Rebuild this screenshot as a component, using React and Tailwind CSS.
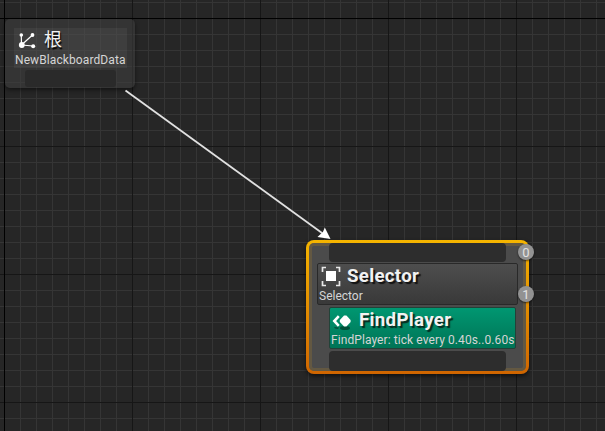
import React from "react";

const verticals = Array.from({ length: 38 }, (_, i) => 4 + i * 16);
const horizontals = Array.from({ length: 27 }, (_, i) => 2 + i * 16);

function Grid() {
  return (
    <svg className="absolute inset-0" width="605" height="431" shapeRendering="crispEdges">
      {verticals.map((x) => (
        <rect key={x} x={x} y="0" width="1" height="431" fill="#353535" />
      ))}
      {horizontals.map((y) => (
        <rect key={y} x="0" y={y} width="605" height="1" fill="#353535" />
      ))}
      {[132, 260, 388, 516].map((x) => (
        <rect key={x} x={x} y="0" width="1" height="431" fill="#161616" />
      ))}
      {[146, 274, 402].map((y) => (
        <rect key={y} x="0" y={y} width="605" height="1" fill="#161616" />
      ))}
      <rect x="4" y="0" width="1" height="431" fill="#000" />
      <rect x="0" y="18" width="605" height="1" fill="#000" />
    </svg>
  );
}

function RootIcon() {
  return (
    <svg className="block shrink-0" width="18" height="18" viewBox="0 0 18 18" fill="#fff" stroke="#fff">
      <path d="M3.500 14 3.300 4M3.500 14 14.500 4M3.500 14 15 15" fill="none" strokeWidth="1.2" />
      <g stroke="none">
        <circle cx="3.8" cy="14" r="2.9" />
        <circle cx="3.3" cy="4" r="1.8" />
        <circle cx="14.5" cy="4" r="1.9" />
        <circle cx="15.2" cy="15.2" r="2" />
      </g>
    </svg>
  );
}

function SelectorIcon() {
  return (
    <svg className="block shrink-0" width="20" height="23" viewBox="0 0 20 23">
      <path
        d="M1.500 7V2.500H5M15 2.500H18.500V7M1.500 16V20.500H5M15 20.500H18.500V16"
        fill="none"
        stroke="#e8e8e8"
        strokeWidth="1.7"
      />
      <rect x="5" y="6" width="10" height="10" fill="#fff" />
    </svg>
  );
}

function ServiceIcon() {
  return (
    <svg className="block shrink-0 overflow-visible" width="20" height="18" viewBox="0 0 20 18">
      <ellipse cx="13" cy="15" rx="5" ry="2" fill="#003d2c" opacity=".75" />
      <path d="M2 14 7 14.5 6 16 3 15.5Z" fill="#003d2c" opacity=".7" />
      <path d="M6.8 3.2 2.3 8 6.8 12.8" fill="none" stroke="#fff" strokeWidth="2.6" />
      <path d="M12 2.500H14.400L18.600 6.900V9.100L14.400 13.500H12L7.800 9.100V6.900Z" fill="#fff" />
    </svg>
  );
}

function Badge({ children, className }) {
  return (
    <span
      className={`absolute flex size-4 items-center justify-center rounded-full bg-[#929292] text-[13px] leading-none text-[#e2e2e2] shadow-[0_1px_2px_rgba(0,0,0,0.6)] ${className}`}
    >
      {children}
    </span>
  );
}

export default function App() {
  return (
    <main className="relative h-[431px] w-[605px] overflow-hidden bg-[#262626] font-[Roboto,'Noto_Sans_CJK_SC',sans-serif] text-xs text-[#d5d5d5]">
      <Grid />

      <section className="absolute left-[5px] top-[19px] flex h-[69px] w-[130px] flex-col rounded-[5px] bg-[#3e3e3e]/60 px-[9px] pt-[9px] shadow-[0_2px_4px_rgba(0,0,0,0.5)]">
        <div className="h-10 w-[113px] bg-white/[0.05]">
          <div className="flex h-[25px] items-start pl-1">
            <div className="pt-[3px]">
              <RootIcon />
            </div>
            <h1 className="-mt-px ml-[8px] font-['Noto_Sans_CJK_SC',sans-serif] text-[18px] font-normal leading-[22px] text-[#f2f2f2] [text-shadow:1px_2px_1px_#000]">
              根
            </h1>
          </div>
          <p className="whitespace-nowrap pl-px leading-[14px] tracking-[0.1px]">NewBlackboardData</p>
        </div>
        <div className="ml-[11px] mt-[2px] h-[17px] w-[91px] rounded-[3px] bg-[#292929]/90" />
      </section>

      <svg className="absolute inset-0" width="605" height="431">
        <path d="M125.500 90.500 322 233" stroke="#e1e1e1" strokeWidth="1.800" />
        <path d="M330.500 239 324.800 227.500 323 231.800 317.500 237Z" fill="#fff" />
      </svg>

      <section className="absolute left-[306px] top-[240px] h-[134px] w-[223px] rounded-[8px] bg-linear-to-b from-[#f5b500] to-[#cf6500] p-[3px] shadow-[0_2px_4px_rgba(0,0,0,0.6)]">
        <div className="flex h-32 w-[217px] flex-col rounded-[5px] bg-[#4b4b4b] pl-2 shadow-[inset_0_0_0_3px_rgba(128,105,55,0.45)]">
          <div className="ml-3 h-[19px] w-[177px] shrink-0 rounded-[4px] bg-[#2d2d2d]" />
          <div className="mt-px h-[42px] w-[201px] shrink-0 rounded-[2px] border border-[#292929] bg-linear-to-b from-[#4e4e4e] to-[#393939]">
            <div className="flex h-[25px] items-start pl-[3px]">
              <div className="pt-px">
                <SelectorIcon />
              </div>
              <h2 className="ml-[6px] pt-px text-[18.700px] font-bold leading-[22px] tracking-[0.3px] text-[#f2f2f2] [text-shadow:2px_2px_1px_#111]">
                Selector
              </h2>
            </div>
            <p className="pl-px leading-[14px]">Selector</p>
          </div>
          <div className="ml-3 mt-[2px] h-[42px] w-[187px] shrink-0 rounded-[2px] border border-[#224238] bg-linear-to-b from-[#009771] to-[#007456]">
            <div className="flex h-[25px] items-start pl-[2px]">
              <div className="pt-[5px]">
                <ServiceIcon />
              </div>
              <h2 className="ml-[7px] pt-px text-[18.700px] font-bold leading-[22px] tracking-[0.3px] text-[#f2f2f2] [text-shadow:2px_2px_1px_#062b20]">
                FindPlayer
              </h2>
            </div>
            <p className="whitespace-nowrap pl-px leading-[14px] tracking-[0.080px]">FindPlayer: tick every 0.40s..0.60s</p>
          </div>
          <div className="ml-3 mt-[2px] h-5 w-[177px] shrink-0 rounded-[4px] bg-[#2d2d2d]" />
        </div>
        <Badge className="left-[212px] top-[4px]">0</Badge>
        <Badge className="left-[212px] top-[46px]">1</Badge>
      </section>
    </main>
  );
}
